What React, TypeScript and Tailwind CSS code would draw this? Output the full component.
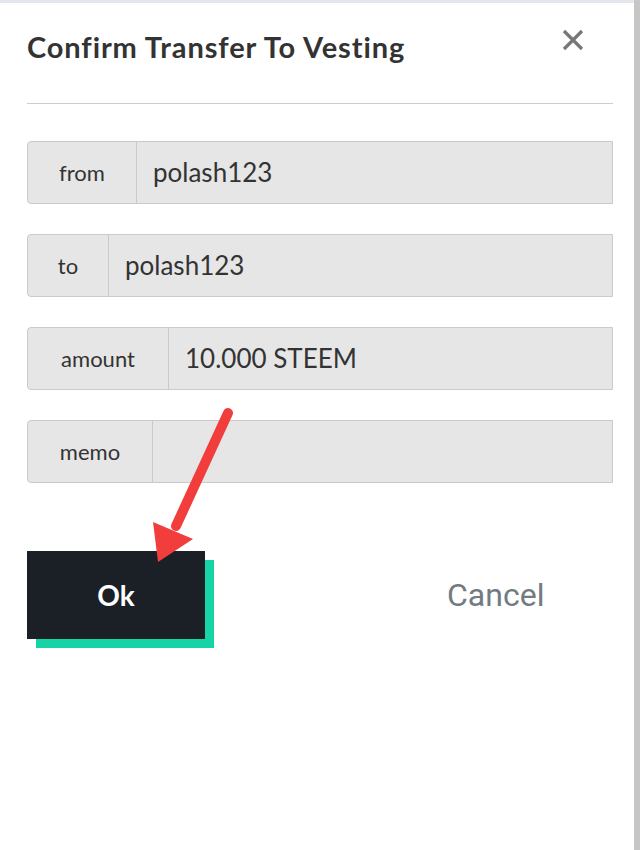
import React from "react";

interface Field {
  label: string;
  value: string;
  labelWidth: string;
}

const fields: Field[] = [
  { label: "from", value: "polash123", labelWidth: "w-[109px]" },
  { label: "to", value: "polash123", labelWidth: "w-[81px]" },
  { label: "amount", value: "10.000 STEEM", labelWidth: "w-[141px]" },
  { label: "memo", value: "", labelWidth: "w-[125px]" },
];

const FieldRow = ({ label, value, labelWidth }: Field) => {
  return (
    <div className="flex h-[63px] border border-[#cacaca] rounded-l-[4px] bg-[#e6e6e6]">
      <div
        className={`${labelWidth} shrink-0 flex items-center justify-center border-r border-[#cacaca] text-[22px] text-[#333]`}
      >
        {label}
      </div>
      <div className="flex-1 flex items-center pl-[16px] text-[26px] text-[#333]">
        {value}
      </div>
    </div>
  );
};

const App = () => {
  return (
    <div className="relative w-[640px] h-[850px] bg-white flex overflow-hidden font-['Lato','Noto_Sans',sans-serif]">
      <div className="flex-1 flex flex-col">
        <div className="h-[3px] bg-[#e4e6ee]" />
        <div className="pl-[27px] pr-[21px]">
          {/* Header */}
          <div className="flex justify-between items-start pt-[27px]">
            <h1 className="text-[29px] leading-[34px] tracking-[0.9px] font-bold text-[#333]">
              Confirm Transfer To Vesting
            </h1>
            <button className="mr-[29px] mt-[-1px] text-[#777]">
              <svg width="22" height="22" viewBox="0 0 22 22">
                <path
                  d="M2 2 L20 20 M20 2 L2 20"
                  stroke="currentColor"
                  strokeWidth="3.2"
                  strokeLinecap="butt"
                />
              </svg>
            </button>
          </div>
          <div className="mt-[39px] h-px bg-[#cccccc]" />

          {/* Fields */}
          <div className="mt-[37px] flex flex-col gap-[30px]">
            {fields.map((f) => (
              <FieldRow key={f.label} {...f} />
            ))}
          </div>

          {/* Actions */}
          <div className="mt-[68px] flex items-center">
            <button className="w-[178px] h-[88px] bg-[#1b2026] text-white text-[28px] font-bold shadow-[9px_9px_0_#17d3a6]">
              Ok
            </button>
            <button className="ml-[242px] text-[32px] text-[#737b82] font-['Roboto',sans-serif]">
              Cancel
            </button>
          </div>
        </div>
      </div>
      <div className="w-[6px] bg-[#c6c6c6]" />

      {/* Annotation arrow */}
      <svg
        className="absolute left-0 top-0 pointer-events-none"
        width="640"
        height="850"
        viewBox="0 0 640 850"
      >
        <line
          x1="228"
          y1="413"
          x2="176"
          y2="526"
          stroke="#f23d3d"
          strokeWidth="10"
          strokeLinecap="round"
        />
        <polygon points="153,522 193,539 158,562" fill="#f23d3d" />
      </svg>
    </div>
  );
};

export default App;
